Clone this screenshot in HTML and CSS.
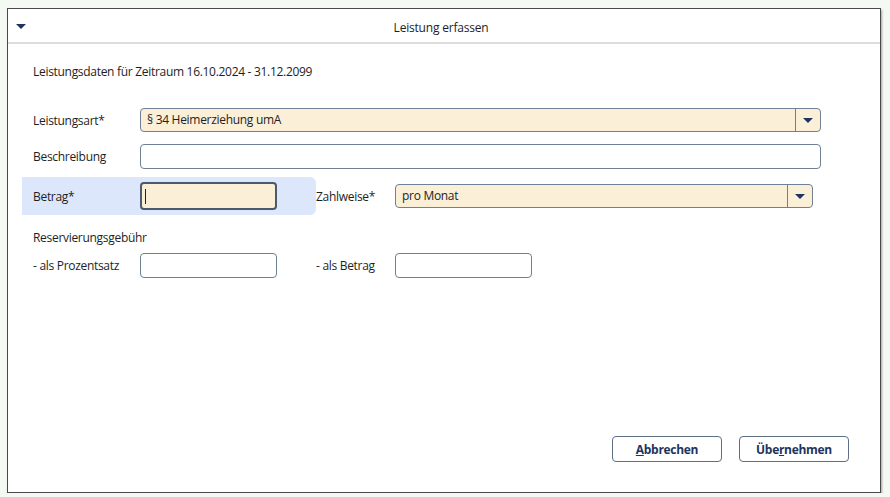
FILE: index.html
```html
<!DOCTYPE html>
<html lang="de">
<head>
    <meta charset="UTF-8">
    <title>Leistung erfassen</title>
    <link rel="stylesheet" href="styles.css">
</head>
<body>
    <div class="window">
        <div class="titlebar">
            <span class="menu-arrow"></span>
            <div class="title">Leistung erfassen</div>
        </div>

        <div class="content">
            <div class="period">Leistungsdaten für Zeitraum 16.10.2024 - 31.12.2099</div>

            <div class="row row-first">
                <label class="label">Leistungsart*</label>
                <div class="combo combo-wide required">
                    <span class="combo-text">§ 34 Heimerziehung umA</span>
                    <span class="combo-btn"><span class="arrow"></span></span>
                </div>
            </div>

            <div class="row row-second">
                <label class="label">Beschreibung</label>
                <div class="field field-wide"></div>
            </div>

            <div class="row row-third">
                <div class="focus-group">
                    <label class="label">Betrag*</label>
                    <div class="field field-small required focused"><span class="caret"></span></div>
                </div>
                <label class="label label-mid">Zahlweise*</label>
                <div class="combo combo-mid required">
                    <span class="combo-text">pro Monat</span>
                    <span class="combo-btn"><span class="arrow"></span></span>
                </div>
            </div>

            <div class="section">Reservierungsgebühr</div>

            <div class="row row-fifth">
                <label class="label">- als Prozentsatz</label>
                <div class="field field-small"></div>
                <label class="label label-mid label-right">- als Betrag</label>
                <div class="field field-small"></div>
            </div>

            <div class="footer">
                <button class="btn"><u>A</u>bbrechen</button>
                <button class="btn">Übe<u>r</u>nehmen</button>
            </div>
        </div>
    </div>
</body>
</html>
```

FILE: styles.css
```css
body {
    margin: 0;
    background: #f4faf3;
    font-family: "Open Sans", "Noto Sans", sans-serif;
    font-size: 12px;
    color: #1e1e1e;
}

.window {
    margin: 8px 0 0 7px;
    width: 872px;
    height: 483px;
    background: #fff;
    border: 1px solid #4a4a4a;
    box-shadow: 1px 2px 2px rgba(0,0,0,0.35);
    display: flex;
    flex-direction: column;
}

.titlebar {
    height: 33px;
    border-bottom: 2px solid #dcdcdc;
    display: flex;
    align-items: center;
    position: relative;
}

.menu-arrow {
    position: absolute;
    left: 8px;
    top: 15px;
    border-left: 5px solid transparent;
    border-right: 5px solid transparent;
    border-top: 5px solid #1d3461;
}

.title {
    flex: 1;
    text-align: center;
    letter-spacing: -0.2px;
    padding: 3px 6px 0 0;
}

.content {
    flex: 1;
    display: flex;
    flex-direction: column;
    padding: 0 31px 30px 14px;
}

.period {
    margin: 20px 0 0 11px;
    line-height: 16px;
    letter-spacing: -0.3px;
}

.row {
    display: flex;
    align-items: center;
}

.row-first {
    margin-top: 28px;
}

.row-second {
    margin-top: 12px;
}

.row-third {
    margin-top: 8px;
}

.row-fifth {
    margin-top: 7px;
}

.label {
    width: 107px;
    padding-left: 11px;
    flex-shrink: 0;
    letter-spacing: -0.3px;
}

.label-mid {
    width: 79px;
    padding-left: 0;
}

.label-right {
    margin-left: 39px;
}

.focus-group {
    display: flex;
    align-items: center;
    width: 294px;
    height: 38px;
    background: #dce7fb;
    border-radius: 0 6px 6px 0;
}

.field, .combo {
    box-sizing: border-box;
    border: 1px solid #6f7f94;
    border-radius: 4px;
    background: #fff;
    height: 25px;
}

.required {
    background: #fcefd8;
}

.field-wide {
    width: 681px;
}

.field-small {
    width: 137px;
}

.focused {
    height: 28px;
    border: 2px solid #4b5b6e;
    display: flex;
    align-items: center;
    padding-left: 3px;
}

.caret {
    width: 1px;
    height: 15px;
    background: #222;
}

.combo {
    display: flex;
    align-items: stretch;
}

.combo-wide {
    width: 681px;
    height: 24px;
}

.combo-mid {
    width: 418px;
    height: 24px;
}

.combo-text {
    flex: 1;
    padding-left: 6px;
    line-height: 22px;
    letter-spacing: -0.3px;
}

.combo-btn {
    width: 24px;
    border-left: 1px solid #6f7f94;
    display: flex;
    align-items: center;
    justify-content: center;
}

.arrow {
    border-left: 5px solid transparent;
    border-right: 5px solid transparent;
    border-top: 5px solid #1d3461;
    margin-top: 1px;
}

.section {
    margin: 15px 0 0 11px;
    line-height: 16px;
    letter-spacing: -0.3px;
}

.footer {
    margin-top: auto;
    display: flex;
    justify-content: flex-end;
    gap: 17px;
}

.btn {
    font-family: inherit;
    font-size: 12px;
    font-weight: bold;
    color: #1d3461;
    background: #fff;
    border: 1px solid #5e6e84;
    border-radius: 4px;
    height: 26px;
    width: 110px;
    padding: 0;
    letter-spacing: -0.3px;
}
```
